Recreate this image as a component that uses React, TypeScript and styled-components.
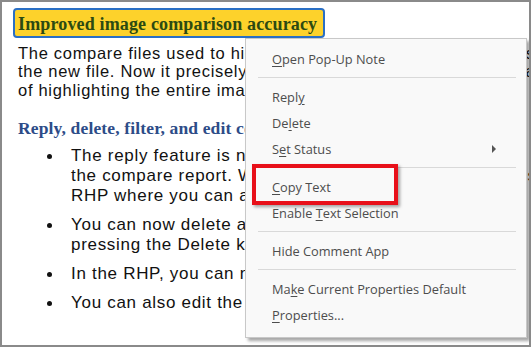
import React from "react";
import styled, { createGlobalStyle } from "styled-components";

const GlobalStyle = createGlobalStyle`
  html, body {
    margin: 0;
    padding: 0;
    background: #ffffff;
  }
`;

interface MenuEntry {
  label: string;
  mnemonic?: number;
  submenu?: boolean;
  highlighted?: boolean;
}

const menuGroups: MenuEntry[][] = [
  [{ label: "Open Pop-Up Note", mnemonic: 0 }],
  [
    { label: "Reply", mnemonic: 4 },
    { label: "Delete", mnemonic: 2 },
    { label: "Set Status", mnemonic: 1, submenu: true },
  ],
  [
    { label: "Copy Text", mnemonic: 0, highlighted: true },
    { label: "Enable Text Selection", mnemonic: 7 },
  ],
  [{ label: "Hide Comment App" }],
  [
    { label: "Make Current Properties Default", mnemonic: 2 },
    { label: "Properties...", mnemonic: 0 },
  ],
];

const introLines = [
  "The compare files used to highlight the differences in the images between the old and",
  "the new file. Now it precisely highlights the area of the image that has changed instead",
  "of highlighting the entire image.",
];

const bullets: string[][] = [
  [
    "The reply feature is now available for the comments in",
    "the compare report. When you reply, the comment opens in the",
    "RHP where you can add your response to it.",
  ],
  [
    "You can now delete a comment by selecting it and",
    "pressing the Delete key on the keyboard.",
  ],
  ["In the RHP, you can now filter the comments by type."],
  ["You can also edit the comments in the compare report."],
];

const Label = ({ entry }: { entry: MenuEntry }) => {
  if (entry.mnemonic === undefined) return <span>{entry.label}</span>;
  const i = entry.mnemonic;
  return (
    <span>
      {entry.label.slice(0, i)}
      <u>{entry.label[i]}</u>
      {entry.label.slice(i + 1)}
    </span>
  );
};

export default function App() {
  return (
    <>
      <GlobalStyle />
      <Page>
        <Document>
          <HeadingBox>Improved image comparison accuracy</HeadingBox>
          <Paragraph>
            {introLines.map((line, i) => (
              <Line key={i}>{line}</Line>
            ))}
          </Paragraph>
          <SubHeading>Reply, delete, filter, and edit comments</SubHeading>
          <BulletList>
            {bullets.map((lines, i) => (
              <BulletItem key={i}>
                <Dot />
                <div>
                  {lines.map((line, j) => (
                    <Line key={j}>{line}</Line>
                  ))}
                </div>
              </BulletItem>
            ))}
          </BulletList>
        </Document>
        <ContextMenu>
          {menuGroups.map((group, gi) => (
            <React.Fragment key={gi}>
              {gi > 0 && <Separator />}
              {group.map((entry) => (
                <MenuItem key={entry.label}>
                  <Label entry={entry} />
                  {entry.submenu && <Arrow />}
                  {entry.highlighted && <RedHighlight />}
                </MenuItem>
              ))}
            </React.Fragment>
          ))}
        </ContextMenu>
      </Page>
    </>
  );
}

const Page = styled.div`
  position: relative;
  box-sizing: border-box;
  width: 531px;
  height: 347px;
  border: 2px solid #8a8a8a;
  overflow: hidden;
  background: #ffffff;
`;

const Document = styled.div`
  padding: 6px 0 0 11px;
  font-family: "Liberation Sans", Arial, sans-serif;
  color: #111111;
`;

const HeadingBox = styled.div`
  display: inline-block;
  box-sizing: border-box;
  height: 30px;
  padding: 3px 6px 0 3px;
  border: 2px solid #2a6fc4;
  border-radius: 4px;
  background: #fdd22b;
  font-family: "Liberation Serif", "Times New Roman", serif;
  font-weight: bold;
  font-size: 18px;
  letter-spacing: 0.15px;
  line-height: 22px;
  color: #2c4a12;
  white-space: nowrap;
`;

const Paragraph = styled.div`
  margin: 6px 0 0 5px;
  font-size: 16.5px;
  letter-spacing: 0.7px;
  line-height: 18.3px;
`;

const Line = styled.div`
  white-space: nowrap;
`;

const SubHeading = styled.div`
  margin: 18.7px 0 0 5px;
  font-family: "Liberation Serif", "Times New Roman", serif;
  font-weight: bold;
  font-size: 17.5px;
  letter-spacing: 0.15px;
  line-height: 20px;
  color: #2d4c88;
  white-space: nowrap;
`;

const BulletList = styled.div`
  display: flex;
  flex-direction: column;
  gap: 9px;
  margin: 8.2px 0 0 33.5px;
  font-size: 17px;
  letter-spacing: 0.7px;
  line-height: 20px;
`;

const BulletItem = styled.div`
  display: flex;
  align-items: flex-start;
  gap: 19.5px;
`;

const Dot = styled.span`
  flex: none;
  width: 5px;
  height: 5px;
  margin-top: 8.7px;
  border-radius: 50%;
  background: #111111;
`;

const ContextMenu = styled.div`
  position: absolute;
  left: 243px;
  top: 36px;
  box-sizing: border-box;
  width: 282px;
  padding: 6.5px 0 9px;
  background: #f9f9f9;
  border: 1px solid #c8c8c8;
  box-shadow: 3px 3px 3px rgba(0, 0, 0, 0.35);
  font-family: "Open Sans", "Noto Sans", sans-serif;
  font-size: 12.8px;
  color: #4d4d4d;
`;

const MenuItem = styled.div`
  position: relative;
  display: flex;
  align-items: center;
  height: 26px;
  padding-left: 26px;
  white-space: nowrap;

  u {
    text-underline-offset: 2px;
  }
`;

const Arrow = styled.span`
  position: absolute;
  right: 30px;
  top: 9px;
  width: 0;
  height: 0;
  border-top: 4px solid transparent;
  border-bottom: 4px solid transparent;
  border-left: 4px solid #555555;
`;

const RedHighlight = styled.span`
  position: absolute;
  left: 6px;
  top: -10px;
  width: 146px;
  height: 41px;
  box-sizing: border-box;
  border: 4px solid #e8101a;
  box-shadow: 2px 2px 3px rgba(0, 0, 0, 0.35);
  pointer-events: none;
`;

const Separator = styled.div`
  height: 1px;
  margin: 5.5px 10px 5.5px 12px;
  background: #d9d9d9;
`;
